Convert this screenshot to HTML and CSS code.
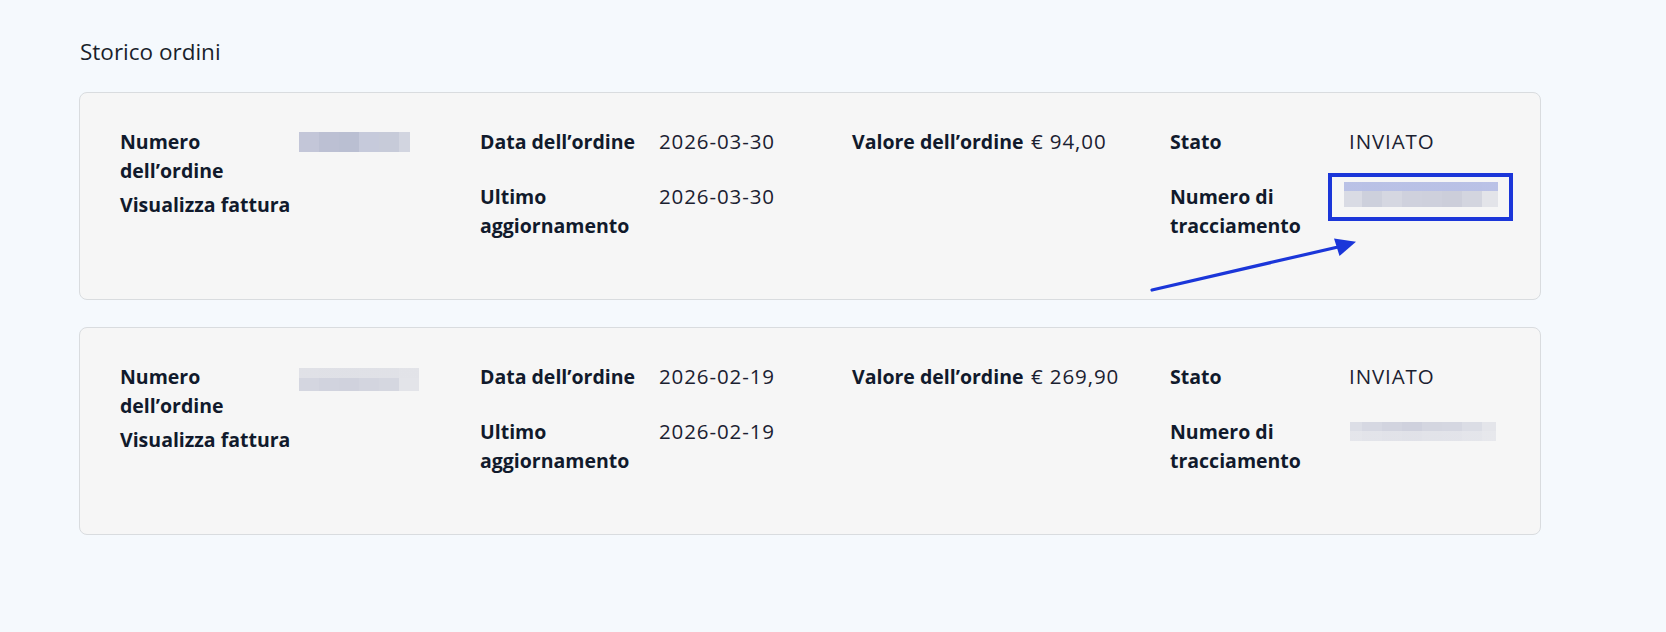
FILE: index.html
```html
<!DOCTYPE html>
<html lang="it">
<head>
<meta charset="utf-8">
<title>Storico ordini</title>
<link rel="stylesheet" href="styles.css">
</head>
<body>
<main class="page">
  <h1 class="title">Storico ordini</h1>

  <section class="order">
    <div class="col col-1">
      <div class="field">
        <span class="label">Numero dell’ordine</span>
        <span class="value"><span class="redacted redacted-id-a"></span></span>
      </div>
      <div class="field">
        <span class="label label-wide">Visualizza fattura</span>
      </div>
    </div>
    <div class="col col-2">
      <div class="field">
        <span class="label">Data dell’ordine</span>
        <span class="value">2026-03-30</span>
      </div>
      <div class="field">
        <span class="label">Ultimo aggiornamento</span>
        <span class="value">2026-03-30</span>
      </div>
    </div>
    <div class="col col-3">
      <div class="field">
        <span class="label">Valore dell’ordine</span>
        <span class="value">€ 94,00</span>
      </div>
    </div>
    <div class="col col-4">
      <div class="field">
        <span class="label">Stato</span>
        <span class="value">INVIATO</span>
      </div>
      <div class="field">
        <span class="label">Numero di tracciamento</span>
        <span class="value"><span class="highlight"><span class="redacted redacted-track-a"></span></span></span>
      </div>
    </div>
    <svg class="arrow" width="230" height="70" viewBox="0 0 230 70" aria-hidden="true">
      <line x1="13" y1="58" x2="199" y2="15" stroke="#1b36d9" stroke-width="3.2" stroke-linecap="round"/>
      <polygon points="217,9.7 195,6.5 200.5,24" fill="#1b36d9"/>
    </svg>
  </section>

  <section class="order">
    <div class="col col-1">
      <div class="field">
        <span class="label">Numero dell’ordine</span>
        <span class="value"><span class="redacted redacted-id-b"></span></span>
      </div>
      <div class="field">
        <span class="label label-wide">Visualizza fattura</span>
      </div>
    </div>
    <div class="col col-2">
      <div class="field">
        <span class="label">Data dell’ordine</span>
        <span class="value">2026-02-19</span>
      </div>
      <div class="field">
        <span class="label">Ultimo aggiornamento</span>
        <span class="value">2026-02-19</span>
      </div>
    </div>
    <div class="col col-3">
      <div class="field">
        <span class="label">Valore dell’ordine</span>
        <span class="value">€ 269,90</span>
      </div>
    </div>
    <div class="col col-4">
      <div class="field">
        <span class="label">Stato</span>
        <span class="value">INVIATO</span>
      </div>
      <div class="field">
        <span class="label">Numero di tracciamento</span>
        <span class="value"><span class="redacted redacted-track-b"></span></span>
      </div>
    </div>
  </section>
</main>
</body>
</html>
```

FILE: styles.css
```css
* {
  box-sizing: border-box;
}

html, body {
  margin: 0;
  padding: 0;
  background: #f5f9fd;
}

body {
  font-family: "Open Sans", "Noto Sans", sans-serif;
  color: #121a2c;
  width: 1666px;
  height: 632px;
  overflow: hidden;
}

.page {
  padding: 37px 0 0 79px;
  width: 1541px;
}

.title {
  margin: 0 0 25px 1px;
  font-size: 22.5px;
  line-height: 30px;
  font-weight: 400;
  color: #1a1f2b;
}

.order {
  position: relative;
  display: grid;
  grid-template-columns: 360px 372px 318px 1fr;
  background: #f6f6f6;
  border: 1px solid #d9dcdf;
  border-radius: 8px;
  padding: 34px 40px 54px;
  margin-bottom: 27px;
  height: 208px;
}

.field {
  display: grid;
  grid-template-columns: 175px 1fr;
  column-gap: 4px;
  min-height: 50px;
  margin-bottom: 5px;
  font-size: 19.5px;
  line-height: 29px;
}

.label {
  font-weight: 700;
  color: #111a2c;
}

.label-wide {
  grid-column: 1 / -1;
}

.value {
  font-weight: 400;
  font-size: 20.5px;
  letter-spacing: 0.9px;
  color: #1b2131;
}

.redacted {
  display: block;
  margin-top: 5px;
}

.redacted-id-a {
  width: 111px;
  height: 20px;
  background: linear-gradient(to right,
    #c3c6d8 0 20px, #bcc0d3 20px 40px, #babfd2 40px 60px,
    #c6cadb 60px 80px, #c7cbd9 80px 100px, #d2d5e0 100px 111px);
}

.redacted-id-b {
  width: 120px;
  height: 23px;
  margin-top: 6px;
  background:
    linear-gradient(to bottom, rgba(226, 227, 232, 0.85) 0 10px, transparent 10px),
    linear-gradient(to right,
      #d4d6e0 0 20px, #d1d3de 20px 40px, #d0d2dd 40px 60px,
      #d3d5df 60px 80px, #d5d7e0 80px 100px, #e3e4e9 100px 120px);
}

.highlight {
  position: relative;
  display: block;
  width: 154px;
  margin-left: -5px;
}

.highlight::after {
  content: "";
  position: absolute;
  top: -9px;
  left: -16px;
  right: -15px;
  bottom: -14px;
  border: 4px solid #1b36d9;
}

.redacted-track-a {
  width: 154px;
  height: 25px;
  margin-top: 0;
  background:
    linear-gradient(to bottom, rgba(184, 192, 230, 0.95) 0 9px, transparent 9px),
    linear-gradient(to right,
      #d9dbe4 0 18px, #cdd0dc 18px 38px, #d5d7e1 38px 58px,
      #cfd1dd 58px 78px, #ced0dc 78px 98px, #ccceda 98px 118px,
      #d3d5df 118px 138px, #e3e4e9 138px 154px);
}

.redacted-track-b {
  width: 146px;
  height: 19px;
  margin-top: 5px;
  margin-left: 1px;
  background:
    linear-gradient(to bottom, transparent 0 9px, rgba(232, 233, 237, 0.7) 9px),
    linear-gradient(to right,
      #dcdee6 0 12px, #d6d8e2 12px 32px, #d2d4df 32px 52px,
      #cfd1dd 52px 72px, #d4d6e0 72px 92px, #d5d7e1 92px 112px,
      #dbdde5 112px 132px, #e4e5ea 132px 146px);
}

.arrow {
  position: absolute;
  left: 1059px;
  top: 139px;
  overflow: visible;
}
```
